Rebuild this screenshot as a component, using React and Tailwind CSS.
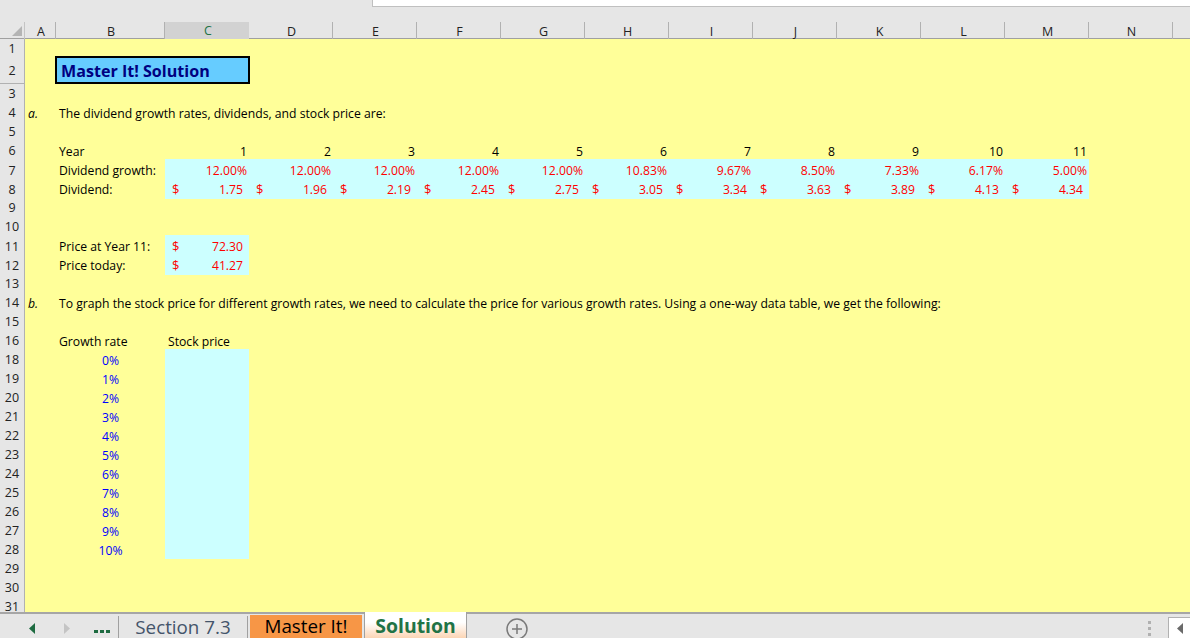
import React from 'react';

const columns = ['A', 'B', 'C', 'D', 'E', 'F', 'G', 'H', 'I', 'J', 'K', 'L', 'M', 'N'];
const gridCols = 'grid grid-cols-[25px_31px_109px_repeat(12,84px)_17px]';

const growth = ['12.00%', '12.00%', '12.00%', '12.00%', '12.00%', '10.83%', '9.67%', '8.50%', '7.33%', '6.17%', '5.00%'];
const dividends = ['1.75', '1.96', '2.19', '2.45', '2.75', '3.05', '3.34', '3.63', '3.89', '4.13', '4.34'];
const rates = ['0%', '1%', '2%', '3%', '4%', '5%', '6%', '7%', '8%', '9%', '10%'];

function RowNumber({ n }) {
  return (
    <div className="bg-[#e6e6e6] border-r border-b border-[#b1b1b1] text-[#222] text-[12.5px] flex items-center justify-center">
      {n}
    </div>
  );
}

// the cyan fill sits one pixel higher than the text row, it covers the gridline above
function Money({ value }) {
  return (
    <div className="bg-[#ccffff] text-[#ff0000] flex justify-between pl-[7px] pr-[6px] pt-[2px] -mt-px mb-px items-center">
      <span className="text-[13px]">$</span>
      <span>{value}</span>
    </div>
  );
}

function Label({ children }) {
  return <div className="pl-[3px] whitespace-nowrap flex items-center">{children}</div>;
}

function Row({ n, children, tall }) {
  return (
    <div className={gridCols + (tall ? ' h-[26px]' : ' h-[19px]')}>
      <RowNumber n={n} />
      {children}
    </div>
  );
}

export default function App() {
  return (
    <div className="w-[1190px] h-[638px] overflow-hidden flex flex-col bg-[#e6e6e6] text-[12.2px] text-black font-['Open_Sans',sans-serif]">
      {/* ribbon edge */}
      <div className="h-[22px] shrink-0 flex justify-end items-start">
        <div className="w-[818px] h-[7px] bg-white border-l border-b border-[#c0c0c0]"></div>
      </div>

      {/* column headers */}
      <div className={gridCols + ' h-[17px] shrink-0 border-b border-[#a0a0a0]'}>
        <div className="flex items-start justify-end pr-[2px] pt-[4px] border-r border-[#c4c4c4]">
          <svg width="10" height="10" viewBox="0 0 10 10"><polygon points="10,0 10,10 0,10" fill="#b4b4b4" /></svg>
        </div>
        {columns.map(c => (
          <div
            key={c}
            className={'flex items-center justify-center text-[12.5px] pl-[2px] ' + (c === 'C'
              ? 'bg-[#d2d2d2] text-[#217346] border-b-2 border-[#217346] -mb-px'
              : 'text-[#222] border-r border-[#b1b1b1]')}
          >
            {c}
          </div>
        ))}
      </div>

      {/* sheet */}
      <div className="flex-1 overflow-hidden bg-[#ffff99] leading-[19px]">
        <Row n={1} />
        <Row n={2} tall>
          <div></div>
          <div className="col-span-2 -mx-px -mt-[2px] bg-[#66ccff] border-2 border-black text-[#000080] font-bold text-[16.1px] flex items-center pl-[4px] pt-[3px] z-10">
            Master It! Solution
          </div>
        </Row>
        <Row n={3} />
        <Row n={4}>
          <div className="pl-[3px] italic flex items-center">a.</div>
          <Label>The dividend growth rates, dividends, and stock price are:</Label>
        </Row>
        <Row n={5} />
        <Row n={6}>
          <div></div>
          <Label>Year</Label>
          {growth.map((_, i) => (
            <div key={i} className="text-right pr-[2px] flex items-center justify-end">{i + 1}</div>
          ))}
        </Row>
        <Row n={7}>
          <div></div>
          <Label>Dividend growth:</Label>
          {growth.map((g, i) => (
            <div key={i} className="bg-[#ccffff] text-[#ff0000] pr-[2px] pt-[2px] -mt-px mb-px flex items-center justify-end">{g}</div>
          ))}
        </Row>
        <Row n={8}>
          <div></div>
          <Label>Dividend:</Label>
          {dividends.map((d, i) => <Money key={i} value={d} />)}
        </Row>
        <Row n={9} />
        <Row n={10} />
        <Row n={11}>
          <div></div>
          <Label>Price at Year 11:</Label>
          <Money value="72.30" />
        </Row>
        <Row n={12}>
          <div></div>
          <Label>Price today:</Label>
          <Money value="41.27" />
        </Row>
        <Row n={13} />
        <Row n={14}>
          <div className="pl-[3px] italic flex items-center">b.</div>
          <Label>To graph the stock price for different growth rates, we need to calculate the price for various growth rates. Using a one-way data table, we get the following:</Label>
        </Row>
        <Row n={15} />
        <Row n={16}>
          <div></div>
          <Label>Growth rate</Label>
          <Label>Stock price</Label>
        </Row>
        {rates.map((r, i) => (
          <Row key={r} n={18 + i}>
            <div></div>
            <div className="text-[#0000ff] flex items-center justify-center">{r}</div>
            <div className="bg-[#ccffff] -mt-px mb-px"></div>
          </Row>
        ))}
        <Row n={29} />
        <Row n={30} />
        <Row n={31} />
      </div>

      {/* sheet tabs */}
      <div className="h-[26px] shrink-0 border-t-2 border-[#a6a6a6] flex items-stretch text-[18.8px] leading-none">
        <div className="w-[119px] flex items-start border-r border-[#a0a0a0] mt-[2px]">
          <svg className="ml-[29px] mt-[7px]" width="6" height="11" viewBox="0 0 6 11"><polygon points="6,0 6,11 0,5.5" fill="#1e6b41" /></svg>
          <svg className="ml-[29px] mt-[7px]" width="6" height="11" viewBox="0 0 6 11"><polygon points="0,0 0,11 6,5.5" fill="#c4c4c4" /></svg>
          <div className="ml-[24px] mt-[14px] flex gap-[2px]">
            <div className="w-[4px] h-[3px] bg-[#1e6b41]"></div>
            <div className="w-[4px] h-[3px] bg-[#1e6b41]"></div>
            <div className="w-[4px] h-[3px] bg-[#1e6b41]"></div>
          </div>
        </div>
        <div className="w-[129px] flex items-center justify-center text-[#44546a] border-r border-[#a0a0a0] mt-[2px]">Section 7.3</div>
        <div className="w-[112px] ml-[2px] bg-[#f79646] flex items-center justify-center mt-px">Master It!</div>
        <div className="w-[103px] ml-[2px] -mt-[2px] bg-gradient-to-b from-white from-40% to-[#fbd5b5] border-x border-[#a0a0a0] flex items-center justify-center font-bold text-[#217346] text-[19.4px] pt-[1px]">Solution</div>
        <div className="ml-[39px] pt-[4px]">
          <svg width="22" height="22" viewBox="0 0 22 22" fill="none" stroke="#7a7a7a" strokeWidth="1.5">
            <circle cx="11" cy="11" r="10" />
            <path d="M11 6v10M6 11h10" />
          </svg>
        </div>
        <div className="flex-1"></div>
        <div className="flex flex-col gap-[3px] mr-[17px] pt-[7px]">
          <div className="w-[3px] h-[3px] bg-[#b0b0b0]"></div>
          <div className="w-[3px] h-[3px] bg-[#b0b0b0]"></div>
          <div className="w-[3px] h-[3px] bg-[#b0b0b0]"></div>
        </div>
        <div className="w-[22px] mt-[3px] bg-white border-l border-t border-[#b1b1b1] flex items-center justify-center">
          <svg width="6" height="11" viewBox="0 0 6 11"><polygon points="6,0 6,11 0,5.5" fill="#6a6a6a" /></svg>
        </div>
      </div>
    </div>
  );
}
